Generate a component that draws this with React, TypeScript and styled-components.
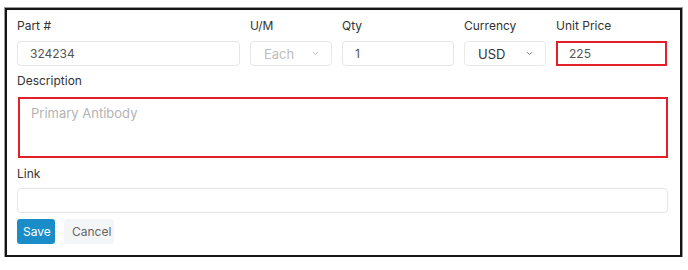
import React from "react";
import styled, { createGlobalStyle } from "styled-components";
import { ChevronDown } from "lucide-react";

const Global = createGlobalStyle`
  html, body { margin: 0; padding: 0; background: #ffffff; }
  body { font-family: Inter, "Noto Sans", "Liberation Sans", sans-serif; }
  * { box-sizing: border-box; }
`;

const Frame = styled.div`
  margin: 8px 0 0 5px;
  width: 677px;
  height: 249px;
  border: 2px solid #151515;
  box-shadow: 0 0 0 1px #9a9a9a;
  padding: 8px 12px 0 10px;
  display: flex;
  flex-direction: column;
`;

const TopRow = styled.div`
  display: grid;
  grid-template-columns: 223px 82px 112px 82px 111px;
  column-gap: 10px;
`;

const Field = styled.div`
  display: flex;
  flex-direction: column;
`;

const Label = styled.div<{ $top?: number }>`
  font-size: 12px;
  line-height: 15px;
  color: #333;
  margin-top: ${(p) => p.$top ?? 0}px;
  height: 15px;
`;

const Input = styled.div<{ $invalid?: boolean; $gap?: number }>`
  margin-top: ${(p) => p.$gap ?? 8}px;
  height: 25px;
  border: ${(p) => (p.$invalid ? "2px solid #e3202a" : "1px solid #e6e6e6")};
  border-radius: ${(p) => (p.$invalid ? "0" : "4px")};
  padding: 0 ${(p) => (p.$invalid ? 11 : 12)}px;
  display: flex;
  align-items: center;
  font-size: 12px;
  color: #555;
`;

const Select = styled.div<{ $disabled?: boolean }>`
  margin-top: 8px;
  height: 25px;
  border: 1px solid #e8e8e8;
  border-radius: 4px;
  padding: 0 11px 0 13px;
  display: flex;
  align-items: center;
  justify-content: space-between;
  font-size: 13px;
  color: ${(p) => (p.$disabled ? "#bdbdbd" : "#333")};
  background: #fff;
  svg { color: ${(p) => (p.$disabled ? "#b0b0b0" : "#555")}; }
`;

const TextArea = styled.div`
  margin-top: 9px;
  margin-left: 1px;
  height: 61px;
  border: 2px solid #e3202a;
  padding: 6px 11px;
  font-size: 13px;
  color: #b3b3b3;
`;

const Buttons = styled.div`
  margin-top: 6px;
  display: flex;
  gap: 9px;
`;

const Button = styled.button<{ $primary?: boolean }>`
  height: 25px;
  padding: 0 ${(p) => (p.$primary ? 6 : 8)}px;
  border: none;
  border-radius: 3px;
  font-family: inherit;
  font-size: 12px;
  background: ${(p) => (p.$primary ? "#1a8dc8" : "#f4f5f7")};
  color: ${(p) => (p.$primary ? "#ffffff" : "#666")};
  width: ${(p) => (p.$primary ? 38 : 50)}px;
`;

export default function App() {
  return (
    <>
      <Global />
      <Frame>
        <TopRow>
          <Field>
            <Label>Part #</Label>
            <Input>324234</Input>
          </Field>
          <Field>
            <Label>U/M</Label>
            <Select $disabled>
              Each <ChevronDown size={9} strokeWidth={2} />
            </Select>
          </Field>
          <Field>
            <Label>Qty</Label>
            <Input>1</Input>
          </Field>
          <Field>
            <Label>Currency</Label>
            <Select>
              USD <ChevronDown size={9} strokeWidth={2} />
            </Select>
          </Field>
          <Field>
            <Label>Unit Price</Label>
            <Input $invalid>225</Input>
          </Field>
        </TopRow>
        <Label $top={7}>Description</Label>
        <TextArea>Primary Antibody</TextArea>
        <Label $top={8}>Link</Label>
        <Input $gap={7} />
        <Buttons>
          <Button $primary>Save</Button>
          <Button>Cancel</Button>
        </Buttons>
      </Frame>
    </>
  );
}
